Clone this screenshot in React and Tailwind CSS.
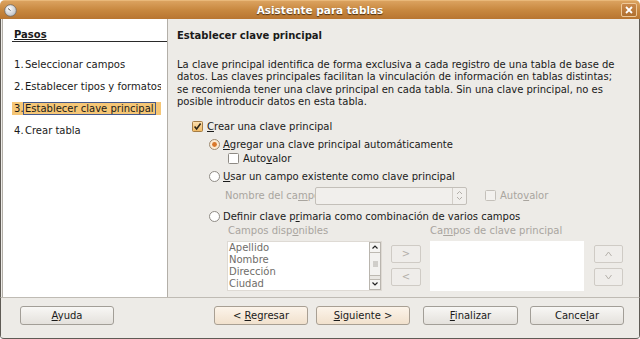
import React from "react";

const U = ({ children }) => (
  <span className="underline underline-offset-[1px] decoration-[1px]">{children}</span>
);

function CheckOn() {
  return (
    <svg width="11" height="11" viewBox="0 0 11 11" className="shrink-0">
      <defs>
        <linearGradient id="cg" x1="0" y1="0" x2="0" y2="1">
          <stop offset="0" stopColor="#fbe0b2" />
          <stop offset="1" stopColor="#f0b860" />
        </linearGradient>
      </defs>
      <rect x="0.5" y="0.5" width="10" height="10" rx="1" fill="url(#cg)" stroke="#a47c45" />
      <path d="M2.6 5.6 L4.6 8 L8.6 2.6" stroke="#2b2418" strokeWidth="1.6" fill="none" />
    </svg>
  );
}

function CheckOff({ disabled }) {
  return (
    <svg width="11" height="11" viewBox="0 0 11 11" className="shrink-0">
      <rect
        x="0.5"
        y="0.5"
        width="10"
        height="10"
        rx="1"
        fill={disabled ? "#f3f1ee" : "#ffffff"}
        stroke={disabled ? "#c4c0ba" : "#8e8a84"}
      />
    </svg>
  );
}

function RadioOn() {
  return (
    <svg width="11" height="11" viewBox="0 0 11 11" className="shrink-0">
      <circle cx="5.5" cy="5.5" r="5" fill="#fcebd3" stroke="#9c8a72" />
      <circle cx="5.5" cy="5.5" r="2.4" fill="#d8772a" />
    </svg>
  );
}

function RadioOff() {
  return (
    <svg width="11" height="11" viewBox="0 0 11 11" className="shrink-0">
      <circle cx="5.5" cy="5.5" r="5" fill="#ffffff" stroke="#8f8b85" />
    </svg>
  );
}

function Btn({ children, className }) {
  return (
    <div
      className={
        "h-[19px] flex items-center justify-center rounded-[3px] border border-[#a29e97] bg-linear-to-b from-[#f8f7f5] to-[#e4e1dc] text-[#1a1a1a] " +
        className
      }
    >
      {children}
    </div>
  );
}

function WarmBtn({ children, className }) {
  return (
    <div
      className={
        "h-[19px] flex items-center justify-center rounded-[3px] border border-[#a89f93] bg-linear-to-b from-[#fcf4ea] to-[#f1e1cd] text-[#1a1a1a] " +
        className
      }
    >
      {children}
    </div>
  );
}

function SmallBtn({ children }) {
  return (
    <div className="h-[18px] flex items-center justify-center rounded-[2px] border border-[#cfcbc5] bg-[#efedea] text-[#b4b0aa]">
      {children}
    </div>
  );
}

const Chev = ({ d }) => (
  <svg width="7" height="6" viewBox="0 0 7 6">
    <path d={d} stroke="#b4b0aa" strokeWidth="1" fill="none" />
  </svg>
);

const steps = [
  "Seleccionar campos",
  "Establecer tipos y formatos",
  "Establecer clave principal",
  "Crear tabla",
];

export default function App() {
  return (
    <div className="w-[640px] h-[339px] bg-white font-['DejaVu_Sans',sans-serif] text-[10px] text-[#1a1a1a] overflow-hidden">
      <div className="w-[640px] h-[339px] flex flex-col rounded-t-[5px] rounded-b-[4px] overflow-hidden bg-[#edebe7] border-b border-[#5f5b55]">
        {/* Title bar */}
        <div className="h-[19px] shrink-0 flex items-center bg-linear-to-b from-[#dba25f] via-[#c8883f] to-[#b87530] border-t border-[#e9b879]">
          <div className="w-[22px] pl-[4px] flex items-center">
            <svg width="13" height="13" viewBox="0 0 13 13">
              <defs>
                <radialGradient id="ig" cx="0.4" cy="0.35" r="0.7">
                  <stop offset="0" stopColor="#ffffff" />
                  <stop offset="1" stopColor="#b9bcc2" />
                </radialGradient>
              </defs>
              <circle cx="6.5" cy="6.5" r="5.8" fill="url(#ig)" stroke="#6d6a66" strokeWidth="0.8" />
              <path d="M4 4.5 L6.5 6.5" stroke="#555" strokeWidth="1" />
            </svg>
          </div>
          <div className="flex-1 text-center font-bold text-white text-[10.5px] leading-[12px] [text-shadow:0_1px_1px_#4a2e10]">
            Asistente para tablas
          </div>
          <div className="w-[22px] flex items-center justify-end pr-[3px]">
            <div className="w-[16px] h-[14px] rounded-[2px] border border-[#eec898] bg-linear-to-b from-[#c9884a] to-[#b0702f] flex items-center justify-center">
              <svg width="8" height="8" viewBox="0 0 8 8">
                <path d="M1 1 L7 7 M7 1 L1 7" stroke="#ffffff" strokeWidth="1.8" />
              </svg>
            </div>
          </div>
        </div>

        {/* Main */}
        <div className="h-[278px] shrink-0 flex border-x border-[#5f5b55]">
          {/* Left panel */}
          <div className="w-[166px] ml-[1px] shrink-0 bg-white border-x border-[#b3afa8] pt-[10px]">
            <div className="ml-[9px] pl-[2px] border-b border-[#2a2a2a] leading-[12px] font-bold underline underline-offset-[1px]">
              Pasos
            </div>
            <div className="mt-[16px] flex flex-col gap-[9px]">
              {steps.map((s, i) =>
                i === 2 ? (
                  <div
                    key={i}
                    className="ml-[9px] w-[149px] h-[13px] flex items-stretch pl-[2px] whitespace-nowrap overflow-hidden bg-[#f5c676]"
                  >
                    <span className="w-[9px] flex items-center">{i + 1}.</span>
                    <span className="flex items-center border border-[#46598a] pl-[1px] pr-[1px]">{s}</span>
                  </div>
                ) : (
                  <div
                    key={i}
                    className="ml-[9px] w-[149px] h-[13px] flex items-stretch pl-[2px] whitespace-nowrap overflow-hidden"
                  >
                    <span className="w-[9px] flex items-center">{i + 1}.</span>
                    <span className="flex items-center border border-transparent pl-[1px] pr-[1px]">{s}</span>
                  </div>
                )
              )}
            </div>
          </div>

          {/* Right panel */}
          <div className="flex-1 pl-[9px] pt-[11px]">
            <div className="font-bold leading-[12px]">Establecer clave principal</div>
            <div className="mt-[17px] leading-[12.4px] whitespace-nowrap">
              La clave principal identifica de forma exclusiva a cada registro de una tabla de base de
              <br />
              datos. Las claves principales facilitan la vinculación de información en tablas distintas;
              <br />
              se recomienda tener una clave principal en cada tabla. Sin una clave principal, no es
              <br />
              posible introducir datos en esta tabla.
            </div>

            {/* Crear */}
            <div className="mt-[11px] h-[14px] flex items-center ml-[15px] gap-[4px]">
              <CheckOn />
              <span>
                <U>C</U>rear una clave principal
              </span>
            </div>
            {/* Agregar */}
            <div className="mt-[4px] h-[14px] flex items-center ml-[32px] gap-[3px]">
              <RadioOn />
              <span>
                <U>A</U>gregar una clave principal automáticamente
              </span>
            </div>
            {/* Autovalor */}
            <div className="h-[14px] flex items-center ml-[51px] gap-[4px]">
              <CheckOff />
              <span>
                Auto<U>v</U>alor
              </span>
            </div>
            {/* Usar */}
            <div className="mt-[4px] h-[14px] flex items-center ml-[32px] gap-[3px]">
              <RadioOff />
              <span>
                <U>U</U>sar un campo existente como clave principal
              </span>
            </div>
            {/* Nombre del campo */}
            <div className="mt-[3px] h-[18px] flex items-center ml-[48px] text-[#a9a59f]">
              <div className="w-[90px] whitespace-nowrap overflow-hidden">
                Nombre del ca<U>m</U>po
              </div>
              <div className="w-[152px] h-[18px] flex rounded-[2px] border border-[#c3bfb9] bg-[#f1efec]">
                <div className="flex-1" />
                <div className="w-[14px] border-l border-[#d2cec8] flex items-center justify-center">
                  <svg width="7" height="11" viewBox="0 0 7 11">
                    <path d="M1 4 L3.5 1.5 L6 4 M1 7 L3.5 9.5 L6 7" stroke="#b3afa9" strokeWidth="1" fill="none" />
                  </svg>
                </div>
              </div>
              <div className="ml-[18px] flex items-center gap-[4px]">
                <CheckOff disabled />
                <span>
                  Auto<U>v</U>alor
                </span>
              </div>
            </div>
            {/* Definir */}
            <div className="mt-[5px] h-[14px] flex items-center ml-[32px] gap-[3px]">
              <RadioOff />
              <span>
                Definir clave p<U>r</U>imaria como combinación de varios campos
              </span>
            </div>
            {/* Lists */}
            <div className="flex ml-[50px]">
              <div className="w-[155px] flex flex-col">
                <div className="h-[14px] flex items-center pl-[1px] text-[#a9a59f]">
                  Campos disp<U>o</U>nibles
                </div>
                <div className="mt-[3px] h-[50px] flex bg-white border border-[#dedad4]">
                  <div className="flex-1 pl-[1px] leading-[12.2px] text-[#6f6d69] overflow-hidden">
                    <div>Apellido</div>
                    <div>Nombre</div>
                    <div>Dirección</div>
                    <div>Ciudad</div>
                  </div>
                  <div className="w-[12px] flex flex-col border border-[#b9b5ae] bg-[#e9e7e3]">
                    <div className="h-[10px] flex items-center justify-center bg-[#f5f4f2] border-b border-[#bdb9b2]">
                      <svg width="6" height="4" viewBox="0 0 6 4">
                        <path d="M0.5 3.5 L3 1 L5.5 3.5" stroke="#222" strokeWidth="1.2" fill="none" />
                      </svg>
                    </div>
                    <div className="h-[23px] flex items-center justify-center bg-[#f3f2f0] border-b border-[#bdb9b2]">
                      <svg width="5" height="6" viewBox="0 0 5 6">
                        <path d="M0 1 H5 M0 3 H5 M0 5 H5" stroke="#9d9993" strokeWidth="0.8" />
                      </svg>
                    </div>
                    <div className="flex-1" />
                    <div className="h-[10px] flex items-center justify-center bg-[#f5f4f2] border-t border-[#bdb9b2]">
                      <svg width="6" height="4" viewBox="0 0 6 4">
                        <path d="M0.5 0.5 L3 3 L5.5 0.5" stroke="#222" strokeWidth="1.2" fill="none" />
                      </svg>
                    </div>
                  </div>
                </div>
              </div>
              <div className="ml-[9px] w-[30px] flex flex-col pt-[21px] gap-[5px]">
                <SmallBtn>&gt;</SmallBtn>
                <SmallBtn>&lt;</SmallBtn>
              </div>
              <div className="ml-[9px] w-[154px] flex flex-col">
                <div className="h-[14px] flex items-center text-[#a9a59f]">
                  Ca<U>m</U>pos de clave principal
                </div>
                <div className="mt-[3px] h-[50px] bg-white" />
              </div>
              <div className="ml-[10px] w-[29px] flex flex-col pt-[21px] gap-[5px]">
                <SmallBtn>
                  <Chev d="M0.5 5 L3.5 1 L6.5 5" />
                </SmallBtn>
                <SmallBtn>
                  <Chev d="M0.5 1 L3.5 5 L6.5 1" />
                </SmallBtn>
              </div>
            </div>
          </div>
        </div>

        {/* Footer */}
        <div className="flex-1 flex items-start pt-[8px] pl-[19px] pr-[15px] border-t border-[#bfbbb4] border-x border-x-[#5f5b55]">
          <Btn className="w-[94px]">
            <span>
              <U>A</U>yuda
            </span>
          </Btn>
          <div className="ml-auto flex">
            <WarmBtn className="w-[94px]">
              <span>
                &lt; <U>R</U>egresar
              </span>
            </WarmBtn>
            <WarmBtn className="ml-[8px] w-[94px]">
              <span>
                <U>S</U>iguiente &gt;
              </span>
            </WarmBtn>
            <Btn className="ml-[13px] w-[95px]">
              <span>
                <U>F</U>inalizar
              </span>
            </Btn>
            <Btn className="ml-[12px] w-[94px]">
              <span>
                Cance<U>l</U>ar
              </span>
            </Btn>
          </div>
        </div>
      </div>
    </div>
  );
}
